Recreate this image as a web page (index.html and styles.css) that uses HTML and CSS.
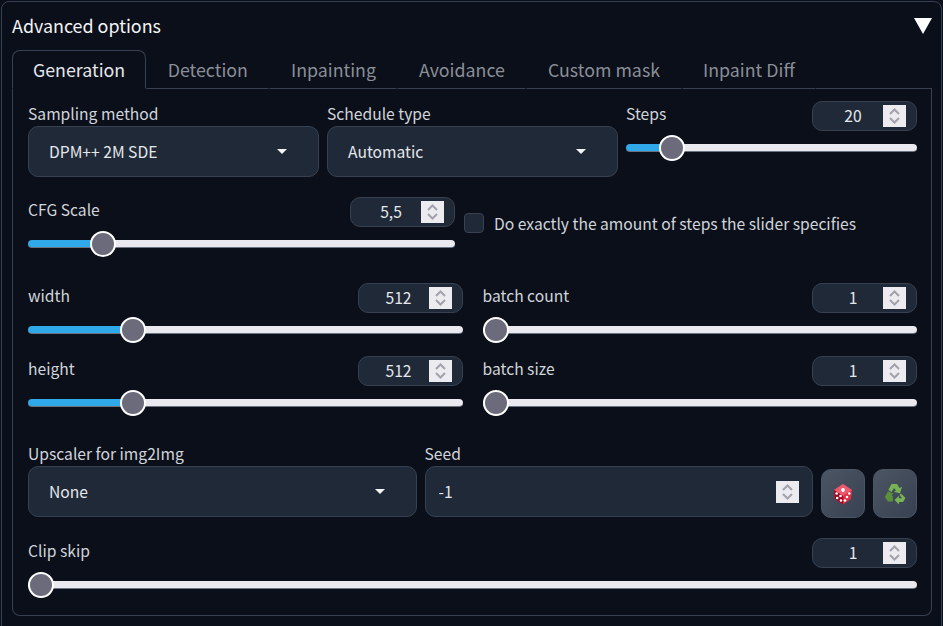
FILE: index.html
```html
<!DOCTYPE html>
<html lang="en">
<head>
  <meta charset="UTF-8">
  <title>Advanced options</title>
  <link rel="stylesheet" href="styles.css">
</head>
<body>

  <svg class="defs" width="0" height="0">
    <symbol id="chevrons" viewBox="0 0 23 22">
      <path d="M7 9 L11.5 4.5 L16 9" fill="none" stroke="#a3a1ab" stroke-width="2"/>
      <path d="M7 13 L11.5 17.5 L16 13" fill="none" stroke="#a3a1ab" stroke-width="2"/>
    </symbol>
  </svg>

  <div class="accordion">
    <div class="accordion-head">
      <span>Advanced options</span>
      <span class="accordion-icon"></span>
    </div>

    <div class="tabs">
      <button class="tab active">Generation</button>
      <button class="tab">Detection</button>
      <button class="tab">Inpainting</button>
      <button class="tab">Avoidance</button>
      <button class="tab">Custom mask</button>
      <button class="tab">Inpaint Diff</button>
      <div class="tabs-line"></div>
    </div>

    <div class="tab-panel">
      <div class="row row-three">
        <div class="field">
          <label class="label">Sampling method</label>
          <div class="dropdown">
            <span>DPM++ 2M SDE</span>
            <span class="caret"></span>
          </div>
        </div>
        <div class="field">
          <label class="label">Schedule type</label>
          <div class="dropdown">
            <span>Automatic</span>
            <span class="caret"></span>
          </div>
        </div>
        <div class="slider">
          <div class="slider-head">
            <label class="label">Steps</label>
            <div class="number">
              <input type="text" value="20">
              <svg class="spinner"><use href="#chevrons"/></svg>
            </div>
          </div>
          <input class="range" type="range" min="0" max="100" step="0.1" value="12.5" style="--fill: 46px">
        </div>
      </div>

      <div class="row row-cfg">
        <div class="slider">
          <div class="slider-head">
            <label class="label">CFG Scale</label>
            <div class="number">
              <input type="text" value="5,5">
              <svg class="spinner"><use href="#chevrons"/></svg>
            </div>
          </div>
          <input class="range" type="range" min="0" max="100" step="0.1" value="15.5" style="--fill: 75px">
        </div>
        <label class="check">
          <span class="check-box"></span>
          <span>Do exactly the amount of steps the slider specifies</span>
        </label>
      </div>

      <div class="row row-two">
        <div class="slider">
          <div class="slider-head">
            <label class="label">width</label>
            <div class="number">
              <input type="text" value="512">
              <svg class="spinner"><use href="#chevrons"/></svg>
            </div>
          </div>
          <input class="range" type="range" min="0" max="100" step="0.1" value="22.5" style="--fill: 105px">
        </div>
        <div class="slider">
          <div class="slider-head">
            <label class="label">batch count</label>
            <div class="number">
              <input type="text" value="1">
              <svg class="spinner"><use href="#chevrons"/></svg>
            </div>
          </div>
          <input class="range" type="range" min="0" max="100" value="0" style="--fill: 0px">
        </div>
      </div>

      <div class="row row-two row-tight">
        <div class="slider">
          <div class="slider-head">
            <label class="label">height</label>
            <div class="number">
              <input type="text" value="512">
              <svg class="spinner"><use href="#chevrons"/></svg>
            </div>
          </div>
          <input class="range" type="range" min="0" max="100" step="0.1" value="22.5" style="--fill: 105px">
        </div>
        <div class="slider">
          <div class="slider-head">
            <label class="label">batch size</label>
            <div class="number">
              <input type="text" value="1">
              <svg class="spinner"><use href="#chevrons"/></svg>
            </div>
          </div>
          <input class="range" type="range" min="0" max="100" value="0" style="--fill: 0px">
        </div>
      </div>

      <div class="row row-seed">
        <div class="field">
          <label class="label">Upscaler for img2Img</label>
          <div class="dropdown">
            <span>None</span>
            <span class="caret"></span>
          </div>
        </div>
        <div class="field">
          <label class="label">Seed</label>
          <div class="number seed">
            <input type="text" value="-1">
            <svg class="spinner"><use href="#chevrons"/></svg>
          </div>
        </div>
        <div class="tool-buttons">
          <button class="tool">
            <svg width="20" height="22" viewBox="0 0 20 22">
              <path d="M10 1 L19 7 L18 16 L10 21.5 L2 16 L1 7 Z" fill="#dd2e44"/>
              <path d="M10 1 L19 7 L10 13 L1 7 Z" fill="#ea596e"/>
              <path d="M1 7 L10 13 L10 21.5 L2 16 Z" fill="#a0041e"/>
              <circle cx="10" cy="7" r="1.9" fill="#fff"/>
              <circle cx="3.7" cy="10.5" r="1.3" fill="#fff"/>
              <circle cx="7.5" cy="13" r="1.3" fill="#fff"/>
              <circle cx="4.2" cy="15" r="1.3" fill="#fff"/>
              <circle cx="8" cy="17.5" r="1.3" fill="#fff"/>
              <circle cx="16.3" cy="10.5" r="1.3" fill="#fff"/>
              <circle cx="14" cy="14" r="1.3" fill="#fff"/>
              <circle cx="12" cy="17.5" r="1.3" fill="#fff"/>
            </svg>
          </button>
          <button class="tool">
            <svg width="22" height="22" viewBox="0 0 22 22">
              <path d="M7.5 1 H13 L15.5 5 L18 3.7 L16 10.5 L9.8 8.8 L12 7.6 L10 5 L7.5 9 L4.3 7 Z" fill="#77b255"/>
              <path d="M4 8.5 L9.5 10.5 L7.7 12 L8.8 13.5 V18.5 H4 L0.8 14 Z" fill="#5c913b"/>
              <path d="M17 10.5 L21.5 15 L19 19 H15 V21.5 L10.5 17 L15 12.8 V15.3 H18 L15.5 12 Z" fill="#77b255"/>
            </svg>
          </button>
        </div>
      </div>

      <div class="row row-last">
        <div class="slider">
          <div class="slider-head">
            <label class="label">Clip skip</label>
            <div class="number">
              <input type="text" value="1">
              <svg class="spinner"><use href="#chevrons"/></svg>
            </div>
          </div>
          <input class="range" type="range" min="0" max="100" value="0" style="--fill: 0px">
        </div>
      </div>
    </div>
  </div>

</body>
</html>
```

FILE: styles.css
```css
* {
  box-sizing: border-box;
}

html, body {
  height: 100%;
}

body {
  margin: 0;
  padding: 1px;
  overflow: hidden;
  background: #0b0f19;
  color: #e5e7eb;
  font-family: "Noto Sans CJK JP", "Noto Sans", sans-serif;
  font-size: 15.65px;
  line-height: 25px;
}

.defs {
  position: absolute;
}

.accordion {
  height: 640px;
  padding: 0 9px 0 10px;
  border: 1px solid #374151;
  border-radius: 8px;
}

.accordion-head {
  display: flex;
  justify-content: space-between;
  align-items: center;
  height: 48px;
  padding-bottom: 1px;
  color: #f3f4f6;
  font-size: 17.9px;
}

.accordion-icon {
  width: 0;
  height: 0;
  margin-top: 1px;
  border-left: 9px solid transparent;
  border-right: 9px solid transparent;
  border-top: 16px solid #fff;
}

.tabs {
  display: flex;
  height: 39px;
}

.tab {
  padding: 0 20.5px 2px;
  background: none;
  border: 1px solid transparent;
  border-bottom: 1px solid #374151;
  font-family: inherit;
  font-size: 17.8px;
  color: #8a8e97;
  white-space: nowrap;
}

.tab.active {
  padding: 0 20px 2px;
  color: #e5e7eb;
  border-color: #374151;
  border-bottom-color: #0b0f19;
  border-radius: 8px 8px 0 0;
}

.tabs-line {
  flex: 1;
  border-bottom: 1px solid #374151;
}

.tab-panel {
  height: 527px;
  padding: 12px 14px 0 15px;
  border: 1px solid #374151;
  border-top: none;
  border-radius: 0 0 8px 8px;
}

.row {
  display: grid;
  gap: 8px;
  margin-top: 20px;
}

.row:first-child {
  margin-top: 0;
}

.row-three {
  grid-template-columns: repeat(3, 1fr);
}

.row-cfg {
  grid-template-columns: 427px 1fr;
  gap: 9px;
}

.row-two {
  grid-template-columns: 1fr 1fr;
  gap: 20px;
  margin-top: 26px;
}

.row-tight {
  margin-top: 13px;
}

.row-seed {
  grid-template-columns: 1fr 1fr 96px;
  margin-top: 25px;
}

.label {
  color: #d1d5db;
}

.field {
  display: flex;
  flex-direction: column;
}

.dropdown {
  display: flex;
  justify-content: space-between;
  align-items: center;
  height: 51px;
  padding: 0 31px 0 20px;
  background: #1f2937;
  border: 1px solid #374151;
  border-radius: 10px;
}

.caret {
  width: 0;
  height: 0;
  border-left: 5px solid transparent;
  border-right: 5px solid transparent;
  border-top: 5px solid #f3f4f6;
}

.slider-head {
  display: flex;
  justify-content: space-between;
  align-items: flex-start;
  height: 30px;
}

.number {
  display: flex;
  align-items: center;
  width: 105px;
  height: 30px;
  padding: 0 10px;
  background: #1f2937;
  border: 1px solid #374151;
  border-radius: 10px;
}

.number input {
  flex: 1;
  min-width: 0;
  padding: 0;
  background: none;
  border: none;
  color: #e5e7eb;
  font-family: inherit;
  font-size: inherit;
  line-height: 22px;
  text-align: center;
  outline: none;
}

.spinner {
  flex: none;
  width: 23px;
  height: 22px;
  background: #ecebf0;
}

.number.seed {
  width: 100%;
  height: 51px;
  padding: 0 13px;
}

.number.seed input {
  text-align: left;
}

.range {
  display: block;
  width: 100%;
  height: 26px;
  margin: 4px 0 0;
  background: none;
  appearance: none;
  -webkit-appearance: none;
}

.range::-webkit-slider-runnable-track {
  height: 8px;
  background: linear-gradient(to right, #2fa9ea var(--fill), #e9e9ef var(--fill));
  border-radius: 4px;
  border-bottom: 1px solid #6b7280;
}

.range::-webkit-slider-thumb {
  -webkit-appearance: none;
  width: 26px;
  height: 26px;
  margin-top: -9px;
  background: #6b6b7b;
  border: 2px solid #fff;
  border-radius: 50%;
}

.check {
  display: flex;
  align-items: center;
  gap: 10px;
  height: 20px;
  margin-top: 16px;
  color: #d1d5db;
}

.check-box {
  width: 20px;
  height: 20px;
  background: #1f2937;
  border: 1px solid #374151;
  border-radius: 4px;
}

.tool-buttons {
  display: flex;
  gap: 8px;
  padding-top: 28px;
}

.tool {
  display: flex;
  justify-content: center;
  align-items: center;
  width: 44px;
  height: 49px;
  padding: 0;
  background: linear-gradient(to bottom right, #4b5563, #374151);
  border: 1px solid #4b5563;
  border-radius: 10px;
}
```
